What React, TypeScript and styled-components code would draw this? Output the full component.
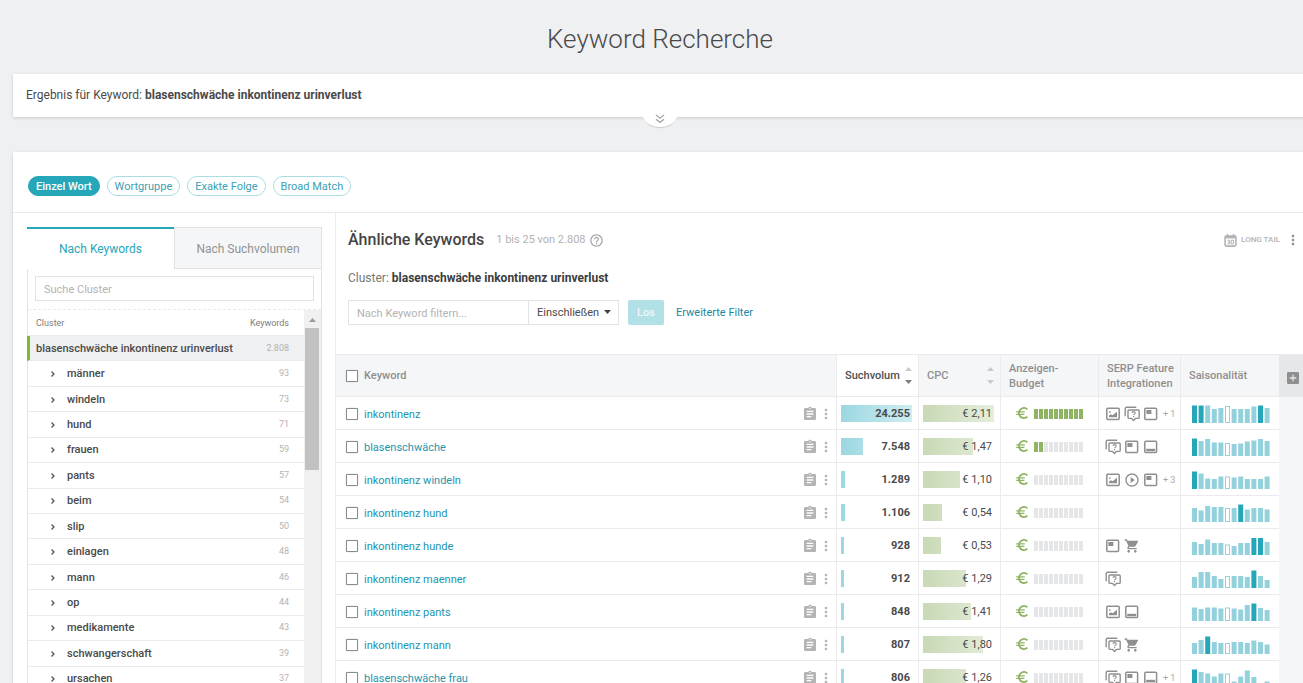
import React from 'react';
import styled, { createGlobalStyle, css } from 'styled-components';
import {
  MdAssignment,
  MdMoreVert,
  MdShoppingCart,
  MdPlayCircleOutline,
  MdHelpOutline,
  MdAddBox,
} from 'react-icons/md';

const color = {
  page: '#eff0f2',
  line: '#ebebed',
  frame: '#e1e2e4',
  tint: '#f5f6f8',
  teal: '#26a7b9',
  tealSoft: '#93d2dc',
  link: '#2395af',
  text: '#4a4a4a',
  muted: '#8f8f8f',
  faint: '#b3b3b3',
  green: '#8fb564',
};

const GlobalStyle = createGlobalStyle`
  *, *::before, *::after { box-sizing: border-box; }
  html { scrollbar-width: none; }
  body {
    margin: 0;
    background: ${color.page};
    color: ${color.text};
    font-family: Roboto, "Liberation Sans", sans-serif;
    font-size: 12px;
    line-height: 16px;
  }
  button, input, select { font: inherit; color: inherit; margin: 0; }
  svg { display: block; flex: none; }
`;

const Page = styled.div`
  overflow: hidden;
`;

const Content = styled.main`
  margin: 0 -4px 0 13px;
`;

const PageTitle = styled.h1`
  margin: 0;
  padding: 23px 0 19px;
  font-size: 26px;
  line-height: 32px;
  font-weight: 300;
  text-align: center;
`;

const Card = styled.section`
  position: relative;
  background: #fff;
  box-shadow: 0 1px 3px rgba(0, 0, 0, 0.16);
`;

const ResultBar = styled(Card)`
  margin-bottom: 35px;
  padding: 13px 13px 14px;
`;

const Expander = styled.button`
  position: absolute;
  top: 100%;
  left: 50%;
  width: 36px;
  height: 18px;
  margin: -8px 0 0 -18px;
  padding: 5px 0 0;
  display: flex;
  justify-content: center;
  border: 0;
  border-radius: 0 0 18px 18px / 0 0 14px 14px;
  background: #fff;
  box-shadow: 0 2px 1px -1px rgba(0, 0, 0, 0.16);
  color: #a6a6a6;
`;

const MatchBar = styled.nav`
  display: flex;
  gap: 7px;
  padding: 24px 15px 16px;
  border-bottom: 1px solid ${color.line};
`;

const Pill = styled.button<{ $active?: boolean }>`
  height: 20px;
  padding: 1px 7px 0;
  border: 1px solid ${(p) => (p.$active ? color.teal : '#a9dce3')};
  border-radius: 10px;
  background: ${(p) => (p.$active ? color.teal : '#fff')};
  color: ${(p) => (p.$active ? '#fff' : '#3d9fb3')};
  font-size: 11px;
  line-height: 18px;
  font-weight: ${(p) => (p.$active ? 500 : 400)};
`;

const Columns = styled.div`
  display: grid;
  grid-template-columns: 323px minmax(0, 1fr);
`;

const Sidebar = styled.aside`
  padding: 14px 13px 0 14px;
  border-right: 1px solid ${color.line};
`;

const ClusterBox = styled.div`
  border: 1px solid ${color.frame};
  border-top: 0;
  border-bottom: 0;
`;

const Tabs = styled.div`
  display: grid;
  grid-template-columns: 1fr 1fr;
  margin-left: -1px;
`;

const Tab = styled.button<{ $active?: boolean }>`
  height: 42px;
  padding: 0;
  border: 0;
  font-size: 12px;
  ${(p) =>
    p.$active
      ? css`
          border-top: 2px solid ${color.teal};
          background: #fff;
          color: ${color.teal};
        `
      : css`
          padding-top: 1px;
          border: 1px solid ${color.frame};
          border-right: 0;
          background: ${color.tint};
          color: #939393;
        `}
`;

const ClusterSearch = styled.div`
  padding: 7px 7px 8px;
  border-bottom: 1px dashed ${color.line};
`;

const TextField = styled.input`
  width: 100%;
  height: 25px;
  padding: 1px 8px 0;
  border: 1px solid ${color.frame};
  background: #fff;
  font-size: 11px;
  outline: 0;
  &::placeholder {
    color: ${color.faint};
    opacity: 1;
  }
`;

const ClusterScroll = styled.div`
  display: grid;
  grid-template-columns: minmax(0, 1fr) 17px;
`;

const ClusterHead = styled.div`
  display: flex;
  justify-content: space-between;
  align-items: center;
  height: 26px;
  padding: 0 15px 0 8px;
  border-bottom: 1px solid ${color.line};
  color: #7d7d7d;
  font-size: 9px;
`;

const ClusterList = styled.ul`
  display: grid;
  grid-auto-rows: 1fr;
  height: 356px;
  margin: 0;
  padding: 0;
  list-style: none;
`;

const ClusterItem = styled.li<{ $selected?: boolean }>`
  display: flex;
  margin-left: -1px;
  border-bottom: 1px solid ${color.line};
  border-left: ${(p) => (p.$selected ? '3px solid #83b92f' : '1px solid ' + color.frame)};
  background: ${(p) => (p.$selected ? '#eff0f2' : '#fff')};
`;

const ClusterButton = styled.button<{ $selected?: boolean }>`
  flex: 1;
  display: flex;
  align-items: center;
  padding: 1px 15px 0 ${(p) => (p.$selected ? 6 : 22)}px;
  border: 0;
  background: transparent;
  color: ${color.text};
  font-size: 11px;
  font-weight: 500;
  text-align: left;
`;

const ClusterName = styled.span<{ $indent?: boolean }>`
  flex: 1;
  padding-left: ${(p) => (p.$indent ? 11 : 0)}px;
`;

const ClusterCount = styled.span`
  padding-bottom: 2px;
  color: ${color.faint};
  font-size: 9px;
  font-weight: 400;
`;

const ScrollTrack = styled.div`
  display: flex;
  flex-direction: column;
  padding: 0 2px 0 1px;
  background: #f0f0f1;
`;

const ScrollArrow = styled.div`
  display: flex;
  justify-content: center;
  align-items: center;
  height: 18px;
  padding-top: 2px;
  color: #9b9b9b;
`;

const ScrollThumb = styled.div`
  height: 142px;
  background: #c1c1c1;
`;

const Results = styled.div`
  min-width: 0;
`;

const ResultsHead = styled.header`
  display: flex;
  align-items: center;
  padding: 16px 6px 0 12px;
`;

const ResultsTitle = styled.h2`
  margin: 0;
  font-size: 16px;
  line-height: 22px;
  font-weight: 500;
  color: #444;
`;

const ResultsCount = styled.span`
  margin: 0 3px 0 12px;
  color: ${color.faint};
  font-size: 11px;
`;

const LongTail = styled.button`
  display: flex;
  align-items: center;
  gap: 4px;
  margin: 0 5px 0 auto;
  padding: 0;
  border: 0;
  background: transparent;
  color: ${color.faint};
  font-size: 8px;
  font-weight: 500;
`;

const IconButton = styled.button`
  display: flex;
  padding: 0;
  border: 0;
  background: transparent;
  color: ${color.muted};
`;

const ClusterLine = styled.p`
  margin: 0;
  padding: 19px 12px 14px;
  color: #777;
  b {
    color: #3c3c3c;
    font-weight: 700;
  }
`;

const FilterForm = styled.form`
  display: flex;
  align-items: center;
  padding: 0 12px 29px;
`;

const FilterField = styled(TextField)`
  width: 181px;
`;

const SelectWrap = styled.span`
  position: relative;
  margin: 0 9px 0 -1px;
  svg {
    position: absolute;
    top: 10px;
    right: 8px;
    pointer-events: none;
  }
`;

const Select = styled.select`
  width: 91px;
  height: 25px;
  padding: 1px 8px 0;
  appearance: none;
  border: 1px solid ${color.frame};
  border-radius: 0;
  background: #fff;
  font-size: 11px;
`;

const SubmitButton = styled.button`
  width: 36px;
  height: 25px;
  padding: 1px 0 0;
  border: 0;
  border-radius: 2px;
  background: #b1e0e6;
  color: #ecf8f9;
  font-size: 11px;
  font-weight: 500;
`;

const Link = styled.a`
  color: ${color.link};
  font-size: 11px;
  text-decoration: none;
`;

const KeywordLink = styled(Link)`
  padding-top: 2px;
`;

const MoreFilters = styled(Link)`
  margin-left: 12px;
  color: #2087a3;
`;

const Table = styled.table`
  width: 100%;
  table-layout: fixed;
  border-collapse: separate;
  border-spacing: 0;
  border-top: 1px solid ${color.line};
  font-size: 11px;
`;

const HeadCell = styled.th<{ $active?: boolean }>`
  height: 42px;
  padding: 0 8px;
  border-bottom: 1px solid ${color.line};
  border-left: 1px solid ${color.line};
  background: ${(p) => (p.$active ? '#fff' : color.tint)};
  color: ${(p) => (p.$active ? '#4f4f4f' : color.muted)};
  line-height: 15px;
  font-weight: 500;
  text-align: left;
  white-space: nowrap;
  &:first-child {
    padding-left: 10px;
    border-left: 0;
  }
  &:last-child {
    padding: 4px 0 0 6px;
    border-left: 0;
    background: #e5e7e8;
  }
`;

const HeadFlex = styled.div`
  display: flex;
  align-items: center;
  justify-content: space-between;
  margin-right: -2px;
`;

const Cell = styled.td`
  height: 33px;
  padding: 0 6px 0 4px;
  border-bottom: 1px solid ${color.line};
  border-left: 1px solid ${color.line};
  &:first-child {
    padding: 2px 2px 0 10px;
    border-left: 0;
  }
  &:last-child {
    border: 0;
    background: ${color.tint};
  }
`;

const KeywordRow = styled.div`
  display: flex;
  align-items: center;
  gap: 6px;
`;

const RowActions = styled.div`
  display: flex;
  margin-left: auto;
  color: #b4b4b4;
`;

const Check = styled.input`
  width: 12px;
  height: 12px;
  flex: none;
  appearance: none;
  border: 1px solid #8b8b8b;
  border-radius: 1px;
  box-shadow: 0 0 1px #8b8b8b;
  background: #fff;
`;

const BarStack = styled.div`
  display: grid;
  align-items: center;
  height: 17px;
  > * {
    grid-area: 1 / 1;
  }
`;

const Bar = styled.div<{ $tone: 'blue' | 'green' }>`
  height: 17px;
  background: ${(p) =>
      p.$tone === 'blue'
        ? 'linear-gradient(90deg, #9bd8e1, #d0edf1)'
        : 'linear-gradient(90deg, #c8d9b5, #e6eedd)'}
    0 0 / 72px 100% no-repeat;
`;

const BarValue = styled.span<{ $strong?: boolean }>`
  padding: 1px 2px 0 0;
  text-align: right;
  font-weight: ${(p) => (p.$strong ? 700 : 400)};
`;

const Budget = styled.div`
  display: flex;
  align-items: center;
  gap: 5px;
  padding-left: 10px;
  color: ${color.green};
`;

const Segments = styled.div`
  display: flex;
  gap: 1px;
  padding-top: 2px;
`;

const Segment = styled.i<{ $on: boolean }>`
  width: 4px;
  height: 10px;
  background: ${(p) => (p.$on ? color.green : '#e5e6e8')};
`;

const Features = styled.div`
  display: flex;
  align-items: center;
  gap: 3px;
  padding: 1px 0 0 2px;
  color: ${color.muted};
`;

const MoreCount = styled.span`
  padding-left: 1px;
  color: #a8a8a8;
  font-size: 9px;
  white-space: nowrap;
`;

const Season = styled.div`
  padding: 2px 0 0 7px;
`;

function Triangle({ down, fill = 'currentColor' }: { down?: boolean; fill?: string }) {
  return (
    <svg width="7" height="4" viewBox="0 0 7 4" fill={fill} aria-hidden="true">
      <path d={down ? 'M0 0h7L3.5 4z' : 'M0 4h7L3.5 0z'} />
    </svg>
  );
}

const SortIcons = styled.span`
  display: grid;
  gap: 9px;
`;

function Sort({ active }: { active?: boolean }) {
  return (
    <SortIcons>
      <Triangle fill="#c9c9c9" />
      <Triangle down fill={active ? '#7d7d7d' : '#c9c9c9'} />
    </SortIcons>
  );
}

function EuroIcon() {
  return (
    <svg width="14" height="14" viewBox="0 0 14 14" fill="none" stroke="currentColor" aria-label="Budget">
      <path d="M12.4 3.3A5 5 0 0 0 4.2 5.4a4.8 4.8 0 0 0 0 3.2A5 5 0 0 0 12.4 10.7" strokeWidth="1.8" />
      <path d="M1.2 5.9h8.6M1.2 8.3h8.2" strokeWidth="1.3" />
    </svg>
  );
}

function ImageIcon() {
  return (
    <svg width="16" height="16" viewBox="0 0 16 16" fill="none" aria-label="Bild">
      <rect x="1.8" y="2.3" width="12.4" height="11.2" rx="1" stroke="currentColor" strokeWidth="1.5" />
      <path d="M4 11.2V9.6l2-1.4 1.6 1L12 5.8v5.4z" fill="currentColor" />
      <rect x="4" y="5.4" width="1.6" height="1.4" fill="currentColor" />
    </svg>
  );
}

function QuestionIcon() {
  return (
    <svg width="16" height="16" viewBox="0 0 16 16" fill="none" aria-label="Fragen">
      <path d="M1.2 10.2V2.6c0-.8.5-1.3 1.3-1.3h9.8" stroke="currentColor" strokeWidth="1.4" />
      <path
        d="M5 4h9.2c.6 0 1 .4 1 1v6.4c0 .6-.4 1-1 1h-2.8l-1.9 2-1.9-2H5c-.6 0-1-.4-1-1V5c0-.6.4-1 1-1z"
        stroke="currentColor"
        strokeWidth="1.4"
      />
      <path d="M8 7c0-1.9 3.2-1.9 3.2 0 0 1.1-1.6 1.1-1.6 2.3" stroke="currentColor" strokeWidth="1.1" />
      <rect x="9" y="10" width="1.2" height="1.2" fill="currentColor" />
    </svg>
  );
}

function SnippetIcon() {
  return (
    <svg width="16" height="16" viewBox="0 0 16 16" fill="none" aria-label="Snippet">
      <rect x="1.8" y="2.3" width="11.8" height="11.2" rx="1" stroke="currentColor" strokeWidth="1.5" />
      <rect x="3.4" y="4" width="5" height="4" fill="currentColor" />
    </svg>
  );
}

function FooterIcon() {
  return (
    <svg width="16" height="16" viewBox="0 0 16 16" fill="none" aria-label="Anzeige unten">
      <rect x="1.8" y="2.3" width="11.8" height="11.2" rx="1" stroke="currentColor" strokeWidth="1.5" />
      <rect x="3.2" y="9.8" width="9" height="2.4" fill="currentColor" />
    </svg>
  );
}

function CalendarIcon() {
  return (
    <svg width="13" height="13" viewBox="0 0 13 13" fill="none" aria-hidden="true">
      <rect x="1.1" y="2.1" width="10.8" height="10" rx="1" stroke="currentColor" strokeWidth="1.6" />
      <path d="M1 3.4h11" stroke="currentColor" strokeWidth="2" />
      <path d="M3.4 0v3M9.6 0v3" stroke="currentColor" strokeWidth="1.6" />
      <path d="M3.4 6.2h2.3v3.8H3.4M3.8 8.1h1.8M7.2 6.2h2.2v3.8H7.2z" stroke="currentColor" strokeWidth="1" />
    </svg>
  );
}

const featureIcons = {
  image: <ImageIcon />,
  question: <QuestionIcon />,
  snippet: <SnippetIcon />,
  footer: <FooterIcon />,
  play: <MdPlayCircleOutline size={16} />,
  cart: <MdShoppingCart size={16} />,
};

type Feature = keyof typeof featureIcons;

const CURRENT_MONTH = 5;

function SeasonChart({ values, peaks }: { values: number[]; peaks: number[] }) {
  return (
    <svg width="78" height="18" viewBox="0 0 78 18" aria-label="Saisonalität">
      {values.map((h, i) =>
        i === CURRENT_MONTH ? (
          <rect
            key={i}
            x={i * 6.6 + 0.5}
            y={18.5 - h}
            width="4"
            height={h - 1}
            fill="#fff"
            stroke={color.tealSoft}
          />
        ) : (
          <rect
            key={i}
            x={i * 6.6}
            y={18 - h}
            width="5"
            height={h}
            fill={peaks.includes(i) ? color.teal : color.tealSoft}
          />
        ),
      )}
    </svg>
  );
}

const clusters: [string, string][] = [
  ['männer', '93'],
  ['windeln', '73'],
  ['hund', '71'],
  ['frauen', '59'],
  ['pants', '57'],
  ['beim', '54'],
  ['slip', '50'],
  ['einlagen', '48'],
  ['mann', '46'],
  ['op', '44'],
  ['medikamente', '43'],
  ['schwangerschaft', '39'],
  ['ursachen', '37'],
];

interface KeywordData {
  name: string;
  volume: string;
  volumeShare: number;
  cpc: string;
  cpcShare: number;
  budget: number;
  features: Feature[];
  more?: number;
  season: number[];
  peaks: number[];
}

const keywords: KeywordData[] = [
  { name: 'inkontinenz', volume: '24.255', volumeShare: 100, cpc: '2,11', cpcShare: 100, budget: 10, features: ['image', 'question', 'snippet'], more: 1, season: [17.5, 17.5, 17.5, 14, 15, 17, 14, 14, 14, 16.5, 17.5, 15], peaks: [0, 1, 10] },
  { name: 'blasenschwäche', volume: '7.548', volumeShare: 31, cpc: '1,47', cpcShare: 70, budget: 2, features: ['question', 'snippet', 'footer'], season: [17.5, 15, 17, 13.5, 13.5, 13, 12, 12.5, 14.5, 15.5, 17, 15], peaks: [0] },
  { name: 'inkontinenz windeln', volume: '1.289', volumeShare: 5, cpc: '1,10', cpcShare: 52, budget: 0, features: ['image', 'play', 'snippet'], more: 3, season: [17.5, 15.5, 10.5, 10, 12.5, 12.5, 11.5, 12.5, 10, 10, 10, 12.5], peaks: [0] },
  { name: 'inkontinenz hund', volume: '1.106', volumeShare: 5, cpc: '0,54', cpcShare: 27, budget: 0, features: [], season: [14, 11.5, 16, 15, 15, 14, 14, 17.5, 12.5, 14, 14, 12.5], peaks: [7] },
  { name: 'inkontinenz hunde', volume: '928', volumeShare: 4, cpc: '0,53', cpcShare: 25, budget: 0, features: ['snippet', 'cart'], season: [13, 11, 15.5, 12, 12, 10.5, 9, 12, 12, 17, 17, 13], peaks: [9, 10] },
  { name: 'inkontinenz maenner', volume: '912', volumeShare: 4, cpc: '1,29', cpcShare: 61, budget: 0, features: ['question'], season: [11, 16, 16, 12, 9, 12, 12, 12, 11, 17.5, 12, 8], peaks: [9] },
  { name: 'inkontinenz pants', volume: '848', volumeShare: 4, cpc: '1,41', cpcShare: 67, budget: 0, features: ['image', 'footer'], season: [13.5, 12, 13.5, 13.5, 12.5, 13.5, 12.5, 11.5, 16, 17.5, 13, 11], peaks: [9] },
  { name: 'inkontinenz mann', volume: '807', volumeShare: 4, cpc: '1,80', cpcShare: 85, budget: 0, features: ['question', 'cart'], season: [11, 14, 17.5, 12, 11, 11, 12, 12, 11, 13.5, 12, 9.5], peaks: [2] },
  { name: 'blasenschwäche frau', volume: '806', volumeShare: 4, cpc: '1,26', cpcShare: 60, budget: 0, features: ['question', 'snippet', 'footer'], more: 1, season: [17.5, 15, 13.5, 10.5, 13.5, 13.5, 5.5, 10.5, 16.5, 10, 2, 5.5], peaks: [0] },
];

function ClusterEntry({ name, count }: { name: string; count: string }) {
  return (
    <ClusterItem>
      <ClusterButton type="button">
        <svg width="6" height="8" viewBox="0 0 6 8" fill="none" stroke="#555" strokeWidth="1.3" aria-hidden="true">
          <path d="M1.5 1.5 4 4 1.5 6.5" />
        </svg>
        <ClusterName $indent>{name}</ClusterName>
        <ClusterCount>{count}</ClusterCount>
      </ClusterButton>
    </ClusterItem>
  );
}

function ClusterPanel() {
  return (
    <ClusterBox>
      <Tabs role="tablist">
        <Tab type="button" role="tab" aria-selected="true" $active>
          Nach Keywords
        </Tab>
        <Tab type="button" role="tab" aria-selected="false">
          Nach Suchvolumen
        </Tab>
      </Tabs>
      <ClusterSearch>
        <TextField type="text" placeholder="Suche Cluster" aria-label="Suche Cluster" />
      </ClusterSearch>
      <ClusterScroll>
        <div>
          <ClusterHead>
            <span>Cluster</span>
            <span>Keywords</span>
          </ClusterHead>
          <ClusterList>
            <ClusterItem $selected>
              <ClusterButton type="button" $selected>
                <ClusterName>blasenschwäche inkontinenz urinverlust</ClusterName>
                <ClusterCount>2.808</ClusterCount>
              </ClusterButton>
            </ClusterItem>
            {clusters.map(([name, count]) => (
              <ClusterEntry key={name} name={name} count={count} />
            ))}
          </ClusterList>
        </div>
        <ScrollTrack aria-hidden="true">
          <ScrollArrow>
            <Triangle />
          </ScrollArrow>
          <ScrollThumb />
        </ScrollTrack>
      </ClusterScroll>
    </ClusterBox>
  );
}

const FixedCol = styled.col<{ $width: number }>`
  width: ${(p) => p.$width}px;
`;

function KeywordTable() {
  return (
    <Table>
      <colgroup>
        <col />
        <FixedCol $width={82} />
        <FixedCol $width={82} />
        <FixedCol $width={98} />
        <FixedCol $width={82} />
        <FixedCol $width={99} />
        <FixedCol $width={28} />
      </colgroup>
      <thead>
        <tr>
          <HeadCell>
            <KeywordRow>
              <Check type="checkbox" id="all" />
              <label htmlFor="all">Keyword</label>
            </KeywordRow>
          </HeadCell>
          <HeadCell $active>
            <HeadFlex>
              Suchvolum
              <Sort active />
            </HeadFlex>
          </HeadCell>
          <HeadCell>
            <HeadFlex>
              CPC
              <Sort />
            </HeadFlex>
          </HeadCell>
          <HeadCell>
            Anzeigen-
            <br />
            Budget
          </HeadCell>
          <HeadCell>
            SERP Feature
            <br />
            Integrationen
          </HeadCell>
          <HeadCell>Saisonalität</HeadCell>
          <HeadCell>
            <IconButton type="button" aria-label="Spalte hinzufügen">
              <MdAddBox size={16} />
            </IconButton>
          </HeadCell>
        </tr>
      </thead>
      <tbody>
        {keywords.map((k) => (
          <tr key={k.name}>
            <Cell>
              <KeywordRow>
                <Check type="checkbox" aria-label={k.name} />
                <KeywordLink href="#">{k.name}</KeywordLink>
                <RowActions>
                  <MdAssignment size={16} />
                  <MdMoreVert size={16} />
                </RowActions>
              </KeywordRow>
            </Cell>
            <Cell>
              <BarStack>
                <Bar $tone="blue" style={{ width: `${k.volumeShare}%` }} />
                <BarValue $strong>{k.volume}</BarValue>
              </BarStack>
            </Cell>
            <Cell>
              <BarStack>
                <Bar $tone="green" style={{ width: `${k.cpcShare}%` }} />
                <BarValue>€ {k.cpc}</BarValue>
              </BarStack>
            </Cell>
            <Cell>
              <Budget>
                <EuroIcon />
                <Segments>
                  {Array.from({ length: 10 }, (_, i) => (
                    <Segment key={i} $on={i < k.budget} />
                  ))}
                </Segments>
              </Budget>
            </Cell>
            <Cell>
              <Features>
                {k.features.map((f) => (
                  <React.Fragment key={f}>{featureIcons[f]}</React.Fragment>
                ))}
                {k.more && <MoreCount>+ {k.more}</MoreCount>}
              </Features>
            </Cell>
            <Cell>
              <Season>
                <SeasonChart values={k.season} peaks={k.peaks} />
              </Season>
            </Cell>
            <Cell />
          </tr>
        ))}
      </tbody>
    </Table>
  );
}

export default function App() {
  return (
    <Page>
      <GlobalStyle />
      <Content>
        <PageTitle>Keyword Recherche</PageTitle>
        <ResultBar>
          Ergebnis für Keyword: <b>blasenschwäche inkontinenz urinverlust</b>
          <Expander type="button" aria-label="Ausklappen">
            <svg width="10" height="10" viewBox="0 0 10 10" fill="none" stroke="currentColor" strokeWidth="1.4" aria-hidden="true">
              <path d="M1 1l4 3.2L9 1M1 5.2l4 3.2 4-3.2" />
            </svg>
          </Expander>
        </ResultBar>
        <Card>
          <MatchBar>
            <Pill type="button" $active>
              Einzel Wort
            </Pill>
            <Pill type="button">Wortgruppe</Pill>
            <Pill type="button">Exakte Folge</Pill>
            <Pill type="button">Broad Match</Pill>
          </MatchBar>
          <Columns>
            <Sidebar>
              <ClusterPanel />
            </Sidebar>
            <Results>
              <ResultsHead>
                <ResultsTitle>Ähnliche Keywords</ResultsTitle>
                <ResultsCount>1 bis 25 von 2.808</ResultsCount>
                <MdHelpOutline size={15} color="#a5a5a5" />
                <LongTail type="button">
                  <CalendarIcon />
                  LONG TAIL
                </LongTail>
                <IconButton type="button" aria-label="Mehr">
                  <MdMoreVert size={16} />
                </IconButton>
              </ResultsHead>
              <ClusterLine>
                Cluster: <b>blasenschwäche inkontinenz urinverlust</b>
              </ClusterLine>
              <FilterForm onSubmit={(e) => e.preventDefault()}>
                <FilterField type="text" placeholder="Nach Keyword filtern..." aria-label="Nach Keyword filtern" />
                <SelectWrap>
                  <Select aria-label="Filtermodus">
                    <option>Einschließen</option>
                  </Select>
                  <Triangle down fill="#444" />
                </SelectWrap>
                <SubmitButton type="submit">Los</SubmitButton>
                <MoreFilters href="#">Erweiterte Filter</MoreFilters>
              </FilterForm>
              <KeywordTable />
            </Results>
          </Columns>
        </Card>
      </Content>
    </Page>
  );
}
